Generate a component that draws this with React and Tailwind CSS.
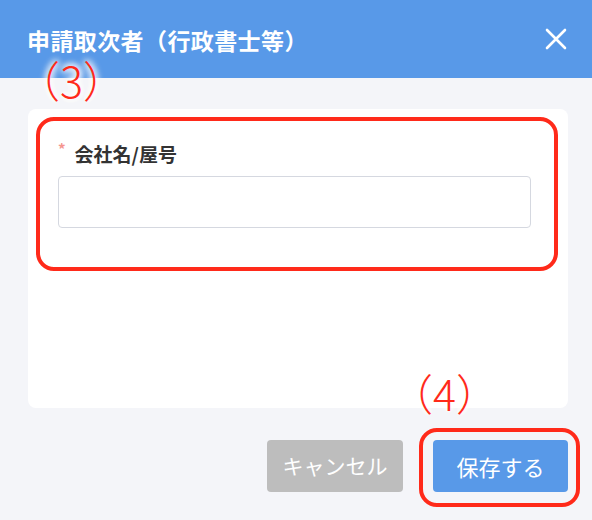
import React from 'react'

const font = { fontFamily: '"Noto Sans CJK JP", "Noto Sans", sans-serif' }

function Mark({ children, className }) {
  return (
    <span
      className={`absolute text-[43px] leading-[44px] font-light text-[#ff2a1a] [text-shadow:0_0_6px_#fff,0_0_6px_#fff,0_0_8px_#fff,0_0_8px_#fff] ${className}`}
    >
      {children}
    </span>
  )
}

function App() {
  return (
    <div style={font} className="relative w-[592px] h-[520px] flex flex-col bg-[#f4f5f9] overflow-hidden">
      {/* ヘッダー */}
      <div className="h-[78px] shrink-0 bg-[#5899e8] flex items-center justify-between pl-[27px] pr-[24px]">
        <h1 className="text-[23px] leading-[23px] font-bold text-white tracking-[0.4px] mt-[2px]">申請取次者（行政書士等）</h1>
        <svg width="24" height="24" viewBox="0 0 24 24" className="text-white">
          <path d="M3 3 L21 21 M21 3 L3 21" stroke="currentColor" strokeWidth="2.6" strokeLinecap="round" />
        </svg>
      </div>

      <div className="flex-1 flex flex-col pl-[28px] pr-[24px] pt-[31px]">
        {/* カード */}
        <div className="h-[299px] bg-white rounded-[8px] pt-[8px] pl-[8px] pr-[10px]">
          <div className="h-[154px] border-[4px] border-[#ff2a1a] rounded-[18px] pl-[18px] pr-[23px] pt-[20px]">
            <label className="flex items-start text-[19px] leading-[26px] font-bold text-[#333]">
              <span className="text-[#f5968f] text-[15px] leading-[15px] mr-[9px]">*</span>
              会社名/屋号
            </label>
            <input className="mt-[9px] w-full h-[52px] border border-[#d5d8e0] rounded-[4px] outline-none bg-white" />
          </div>
        </div>

        {/* ボタン */}
        <div className="mt-[32px] flex justify-end gap-[30px]">
          <button className="w-[136px] h-[52px] rounded-[4px] bg-[#bdbdbd] text-white text-[21px]">キャンセル</button>
          <div className="relative">
            <button className="w-[135px] h-[52px] rounded-[4px] bg-[#5899e8] text-white text-[22px]">保存する</button>
            <div className="absolute -left-[14px] -right-[12px] -top-[12px] -bottom-[15px] border-[4px] border-[#ff2a1a] rounded-[18px]" />
          </div>
        </div>
      </div>

      <Mark className="left-[17px] top-[57px]">（3）</Mark>
      <Mark className="left-[390px] top-[370px]">（4）</Mark>
    </div>
  )
}

export default App
